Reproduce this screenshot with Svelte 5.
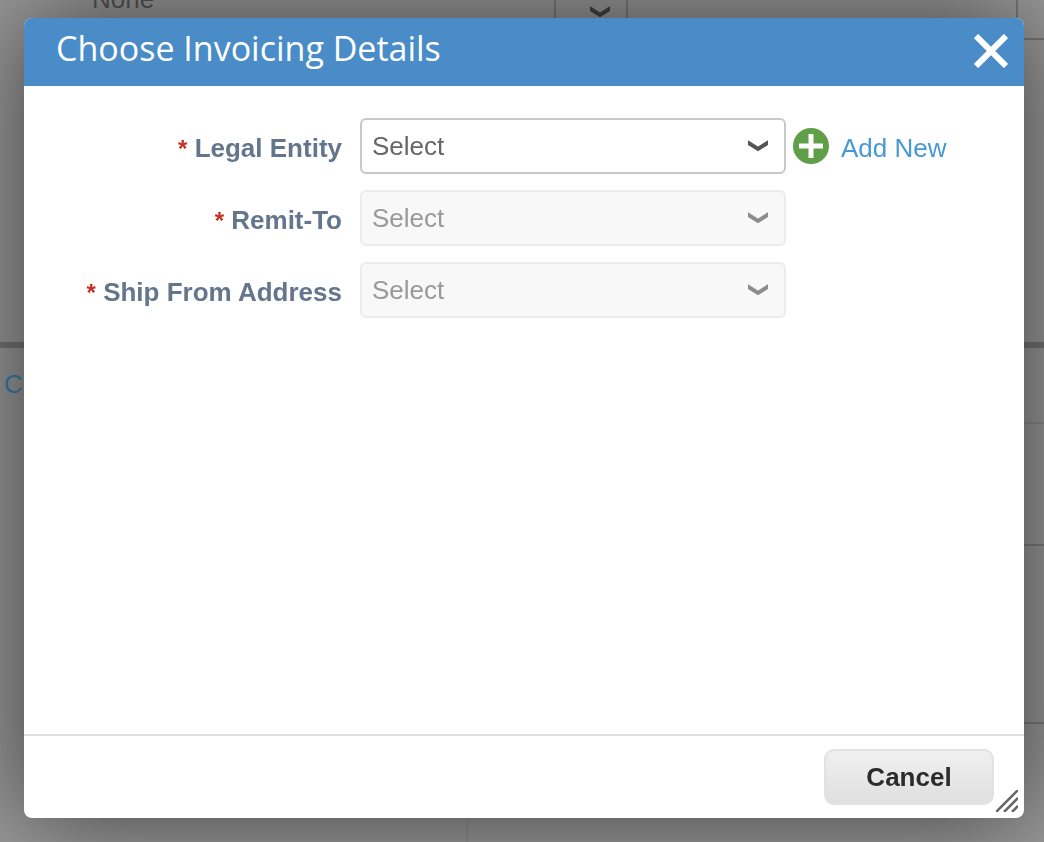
<script lang="ts">
	interface Field {
		id: string;
		label: string;
		disabled: boolean;
		canAdd: boolean;
	}

	const fields: Field[] = [
		{ id: 'legal-entity', label: 'Legal Entity', disabled: false, canAdd: true },
		{ id: 'remit-to', label: 'Remit-To', disabled: true, canAdd: false },
		{ id: 'ship-from', label: 'Ship From Address', disabled: true, canAdd: false }
	];

	let open = $state(true);

	function close() {
		open = false;
	}
</script>

{#snippet chevron()}
	<svg class="chevron" viewBox="0 0 20 14" aria-hidden="true">
		<path d="M-1 3 L10 10 L21 3" fill="none" stroke="currentColor" stroke-width="4" />
	</svg>
{/snippet}

<main class="page" inert={open}>
	<div class="top-row">
		<div class="value">None</div>
		<div class="picker">{@render chevron()}</div>
		<div class="filler"></div>
		<div class="edge"></div>
	</div>
	<div class="top-rest"></div>
	<div class="line-head"><a href="#contact">Co</a></div>
	<div class="line medium"></div>
	<div class="line tall"></div>
	<div class="columns">
		<div class="left"></div>
		<div class="right"></div>
	</div>
</main>

{#if open}
	<div class="overlay">
		<div class="dialog" role="dialog" aria-modal="true" aria-labelledby="dialog-title">
			<header>
				<h1 id="dialog-title">Choose Invoicing Details</h1>
				<button type="button" class="close" aria-label="Close" onclick={close}>
					<svg viewBox="0 0 34 34" aria-hidden="true">
						<path d="M2 2 L32 32 M32 2 L2 32" stroke="currentColor" stroke-width="6" />
					</svg>
				</button>
			</header>

			<form>
				{#each fields as field (field.id)}
					<div class="field">
						<label for={field.id}><span class="required">*</span> {field.label}</label>
						<div class="select" class:disabled={field.disabled}>
							<select id={field.id} disabled={field.disabled} required>
								<option value="">Select</option>
							</select>
							{@render chevron()}
						</div>
						{#if field.canAdd}
							<a class="add" href="#add">
								<svg viewBox="0 0 36 36" aria-hidden="true">
									<circle cx="18" cy="18" r="18" fill="#5f9f47" />
									<path d="M18 6 V30 M6 18 H30" stroke="#fff" stroke-width="5" />
								</svg>
								<span>Add New</span>
							</a>
						{/if}
					</div>
				{/each}
			</form>

			<footer>
				<button type="button" class="cancel" onclick={close}>Cancel</button>
			</footer>

			<svg class="grip" viewBox="0 0 22 22" aria-hidden="true">
				<path d="M0 22 L22 0 M8 22 L22 8 M16 22 L22 16" stroke="#666" stroke-width="2.5" />
			</svg>
		</div>
	</div>
{/if}

<style>
	:global(body) {
		margin: 0;
		background: #999;
		font-family: 'Liberation Sans', Arial, sans-serif;
		font-size: 26px;
	}

	svg {
		display: block;
	}

	.chevron {
		width: 20px;
		height: 14px;
	}

	.page {
		display: flex;
		flex-direction: column;
		box-sizing: border-box;
		height: 100vh;
		overflow: hidden;
		color: #555;
	}

	.top-row {
		display: flex;
		flex: none;
		height: 38px;
	}

	.value {
		box-sizing: border-box;
		width: 554px;
		padding-left: 92px;
		line-height: 30px;
		margin-top: -16px;
	}

	.picker {
		box-sizing: border-box;
		display: flex;
		justify-content: center;
		width: 74px;
		padding: 5px 0 0 18px;
		border: solid #7d7d7d;
		border-width: 0 2px;
		color: #424242;
	}

	.filler {
		flex: 1;
	}

	.edge {
		box-sizing: border-box;
		width: 28px;
		height: 40px;
		border: solid #777;
		border-width: 0 0 2px 2px;
	}

	.top-rest {
		flex: none;
		height: 304px;
		border-bottom: 6px solid #757575;
	}

	.line-head {
		box-sizing: border-box;
		flex: none;
		height: 74px;
		padding: 21px 4px;
		line-height: 30px;
	}

	.line-head a {
		color: #3a80ae;
		text-decoration: none;
	}

	.line {
		box-sizing: border-box;
		flex: none;
		margin-left: 40px;
		border-bottom: 2px solid #7d7d7d;
	}

	.medium {
		height: 124px;
		border-top: 2px solid #8c8c8c;
	}

	.tall {
		height: 178px;
	}

	.columns {
		display: flex;
		flex: 1;
	}

	.left {
		width: 467px;
		border-right: 1px solid #8c8c8c;
	}

	.right {
		flex: 1;
	}

	.overlay {
		position: fixed;
		inset: 0;
		display: flex;
		padding: 18px 20px 24px 24px;
	}

	.dialog {
		position: relative;
		display: flex;
		flex: 1;
		flex-direction: column;
		border-radius: 8px;
		background: #fff;
		box-shadow: 0 0 100px rgba(0, 0, 0, 0.6);
	}

	header {
		display: flex;
		align-items: center;
		justify-content: space-between;
		box-sizing: border-box;
		height: 68px;
		padding: 0 16px 2px 32px;
		border-radius: 8px 8px 0 0;
		background: #498cc8;
		color: #fff;
	}

	h1 {
		margin: 0;
		padding-bottom: 6px;
		font: 400 34px/46px 'Open Sans', sans-serif;
	}

	.close {
		padding: 0;
		border: 0;
		background: none;
		color: inherit;
		cursor: pointer;
	}

	.close svg {
		width: 34px;
		height: 34px;
	}

	form {
		display: flex;
		flex: 1;
		flex-direction: column;
		gap: 16px;
		padding-top: 32px;
	}

	.field {
		display: flex;
		align-items: center;
	}

	label {
		box-sizing: border-box;
		width: 336px;
		padding: 4px 18px 0 0;
		color: #64768b;
		font-weight: 700;
		line-height: 30px;
		text-align: right;
	}

	.required {
		color: #c62f22;
		font-size: 24px;
	}

	.select {
		display: grid;
		align-items: center;
		width: 426px;
		color: #555;
	}

	.select > :global(*) {
		grid-area: 1 / 1;
	}

	.select .chevron {
		justify-self: end;
		margin-right: 18px;
		pointer-events: none;
	}

	select {
		box-sizing: border-box;
		width: 100%;
		height: 56px;
		padding: 0 48px 0 10px;
		border: 2px solid #c8c8c8;
		border-radius: 6px;
		background: #fff;
		color: #666;
		font: inherit;
		appearance: none;
	}

	.disabled {
		color: #8c8c8c;
	}

	.disabled select {
		border-color: #ececec;
		background: #f8f8f8;
		color: #999;
		opacity: 1;
	}

	.add {
		display: flex;
		align-items: center;
		gap: 12px;
		margin-left: 7px;
		color: #4799d4;
		line-height: 30px;
		text-decoration: none;
	}

	.add svg {
		width: 36px;
		height: 36px;
	}

	.add span {
		padding-top: 4px;
	}

	footer {
		display: flex;
		justify-content: flex-end;
		padding: 13px 30px;
		border-top: 2px solid #e0e0e0;
	}

	.cancel {
		width: 170px;
		height: 56px;
		border: 2px solid #e2e2e2;
		border-radius: 10px;
		background: linear-gradient(#f0f0f0, #dfdfdf);
		color: #2b2b2b;
		font: inherit;
		font-weight: 700;
		cursor: pointer;
	}

	.grip {
		position: absolute;
		right: 6px;
		bottom: 6px;
		width: 22px;
		height: 22px;
	}
</style>
